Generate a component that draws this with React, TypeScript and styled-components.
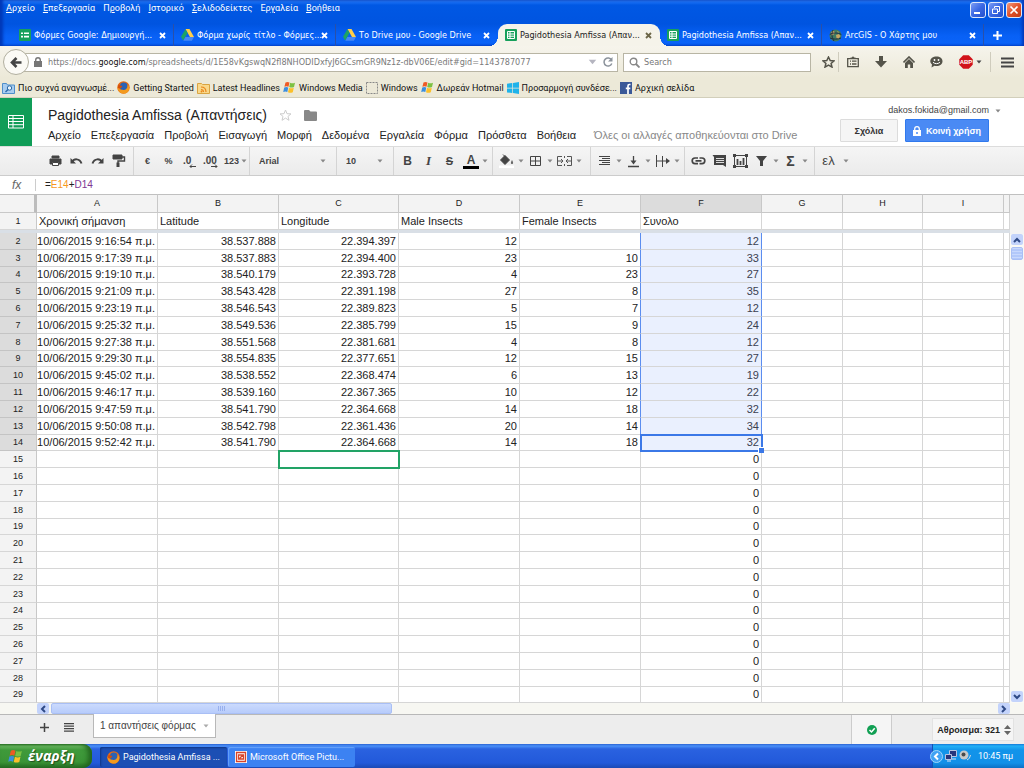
import React from 'react';
import styled, { createGlobalStyle, css } from 'styled-components';

const ui = 'Roboto, "Noto Sans", sans-serif';
const tabFont = '"DejaVu Sans Condensed", "Noto Sans", sans-serif';
const doc = '"Liberation Sans", "Noto Sans", sans-serif';

const GlobalStyle = createGlobalStyle`
  *, *::before, *::after { box-sizing: border-box; }
  body { margin: 0; background: #fff; font-family: ${doc}; color: #222; }
  button, input, select { font: inherit; color: inherit; margin: 0; padding: 0; border: 0; background: none; }
  button { cursor: pointer; white-space: nowrap; }
  svg { display: block; flex: none; }
`;

const Page = styled.div`
  display: flex;
  flex-direction: column;
  min-height: 100vh;
  overflow: hidden;
`;

/* ---------- Browser window ---------- */
const TitleArea = styled.header`
  position: relative;
  display: flex;
  flex-direction: column;
  height: 46px;
  background: linear-gradient(#4298ff 0, #1a70f4 2px, #0058e4 5px, #0054e0 24px, #0861f6 36px, #0a64f8 100%);
  box-shadow: inset 3px 0 3px #0038b8, inset -2px 0 3px #0038b8;
  font: 9px/14px ${ui};
  color: #fff;
`;
const MenuBar = styled.nav`
  display: flex;
  align-items: center;
  gap: 8px;
  height: 16px;
  padding: 0 6px;
  margin-bottom: 8px;
`;
const MenuItem = styled.button`
  color: #fff;
  u { text-underline-offset: 1px; }
`;
const WindowButtons = styled.div`
  position: absolute;
  top: 2px;
  right: 2px;
  display: flex;
  gap: 2px;
`;
const WindowButton = styled.button<{ $close?: boolean }>`
  display: grid;
  place-items: center;
  width: 16px;
  height: 16px;
  border: 1px solid #dfe8fb;
  border-radius: 3px;
  background: ${p => (p.$close ? 'linear-gradient(135deg, #f09a7c, #e2522a 50%, #c23c14)' : 'linear-gradient(135deg, #7c9cf4, #3a68e4 50%, #2450cc)')};
`;
const TabStrip = styled.div`
  display: flex;
  height: 22px;
  padding-left: 12px;
`;
const Tab = styled.div<{ $active?: boolean; $line?: boolean }>`
  position: relative;
  display: flex;
  align-items: center;
  flex: 0 1 162px;
  min-width: 0;
  gap: 3px;
  padding: 0 7px;
  border-right: 1px solid ${p => (p.$line ? '#2a50a8' : 'transparent')};
  font-family: ${tabFont};
  ${p => p.$active && css`
    background: #f5f3ea;
    color: #222;
    border-radius: 9px 9px 0 0;
    &::before, &::after {
      content: '';
      position: absolute;
      bottom: 0;
      width: 8px;
      height: 10px;
    }
    &::before { left: -8px; background: radial-gradient(ellipse 8px 10px at 0 0, transparent 97%, #f5f3ea 100%); }
    &::after { right: -9px; background: radial-gradient(ellipse 8px 10px at 100% 0, transparent 97%, #f5f3ea 100%); }
  `}
`;
const TabTitle = styled.span`
  flex: 1;
  min-width: 0;
  white-space: nowrap;
`;
const TabClose = styled.button<{ $dark?: boolean }>`
  color: ${p => (p.$dark ? '#6b6547' : '#fff')};
`;
const NewTab = styled.button`
  width: 26px;
  display: grid;
  place-items: center;
`;
const NavBar = styled.div`
  display: flex;
  align-items: center;
  height: 32px;
  padding-left: 3px;
  background: linear-gradient(#f6f4ec, #ece9d8);
  font: 9px/14px ${tabFont};
  color: #55544a;
`;
const BackButton = styled.button`
  position: relative;
  display: grid;
  place-items: center;
  width: 26px;
  height: 26px;
  border: 1px solid #b1af9f;
  border-radius: 50%;
  background: #fbfaf5;
  color: #444;
`;
const AddressBox = styled.form`
  display: flex;
  align-items: center;
  flex: 579 1 0;
  min-width: 0;
  height: 19px;
  gap: 6px;
  margin-left: -5px;
  padding: 0 4px 0 9px;
  border: 1px solid #b8b5a4;
  background: #fff;
`;
const Address = styled.a`
  flex: 1;
  overflow: hidden;
  white-space: nowrap;
  color: #7a7a7a;
  text-decoration: none;
  b { color: #111; font-weight: 400; }
`;
const SearchBox = styled.form`
  display: flex;
  align-items: center;
  flex: 176 1 0;
  min-width: 0;
  height: 19px;
  gap: 4px;
  margin-left: 5px;
  padding: 0 5px;
  border: 1px solid #b8b5a4;
  background: #fff;
`;
const SearchInput = styled.input`
  flex: 1;
  min-width: 0;
  outline: 0;
  &::placeholder { color: #777; opacity: 1; }
`;
const NavIcons = styled.div`
  display: flex;
  align-items: center;
  padding-left: 7px;
`;
const NavIcon = styled.button<{ $w?: number; $line?: boolean }>`
  display: flex;
  justify-content: center;
  align-items: center;
  gap: 3px;
  width: ${p => p.$w ?? 28}px;
  height: 20px;
  border-left: 1px solid ${p => (p.$line ? '#cfccbd' : 'transparent')};
`;
const Bookmarks = styled.nav`
  display: flex;
  align-items: center;
  gap: 3px;
  height: 20px;
  padding: 0 2px;
  background: #ece9d8;
  border-bottom: 1px solid #d2cfbb;
  font: 9px/14px ${ui};
`;
const Bookmark = styled.a`
  display: flex;
  align-items: center;
  gap: 3px;
  color: #111;
  text-decoration: none;
  white-space: nowrap;
`;

/* ---------- Document header ---------- */
const DocHeader = styled.header`
  display: flex;
  height: 48px;
`;
const AppLogo = styled.a`
  display: grid;
  place-items: center;
  width: 32px;
  background: #109d58;
`;
const DocInfo = styled.div`
  flex: 1;
  padding: 7px 0 0 16px;
`;
const TitleRow = styled.div`
  display: flex;
  align-items: center;
  gap: 12px;
  height: 20px;
`;
const DocTitle = styled.h1`
  margin: 0;
  font: 400 14px/20px ${doc};
  white-space: nowrap;
`;
const DocMenu = styled.nav`
  display: flex;
  align-items: center;
  gap: 10px;
  height: 19px;
  font-size: 11px;
  line-height: 14px;
`;
const SaveNote = styled.span`
  margin-left: 8px;
  color: #888;
  white-space: nowrap;
`;
const DocActions = styled.div`
  display: flex;
  flex-direction: column;
  align-items: flex-end;
  gap: 2px;
  padding: 6px 35px 0 0;
`;
const Account = styled.button`
  display: flex;
  align-items: center;
  gap: 6px;
  height: 13px;
  margin-right: -12px;
  font-size: 9px;
  line-height: 13px;
  color: #444;
`;
const ActionRow = styled.div`
  display: flex;
  gap: 7px;
`;
const ActionButton = styled.button<{ $primary?: boolean }>`
  display: flex;
  align-items: center;
  justify-content: center;
  gap: 5px;
  width: ${p => (p.$primary ? 84 : 58)}px;
  height: 23px;
  border: 1px solid ${p => (p.$primary ? '#3079ed' : '#dcdcdc')};
  border-radius: 1px;
  background: ${p => (p.$primary ? '#4a8af4' : '#f5f5f5')};
  color: ${p => (p.$primary ? '#fff' : '#333')};
  font-size: 9px;
  font-weight: 700;
`;

/* ---------- Toolbar ---------- */
const Toolbar = styled.div`
  display: flex;
  height: 30px;
  padding-left: 42px;
  border-top: 1px solid #dcdcdc;
  border-bottom: 1px solid #ccc;
  background: linear-gradient(#f5f5f5, #ebebeb);
  color: #444;
  font-size: 9px;
  font-weight: 700;
`;
const ToolGroup = styled.div<{ $w: number }>`
  display: flex;
  align-items: center;
  width: ${p => p.$w}px;
  padding-left: 3px;
  border-right: 1px solid #d4d4d4;
  &:last-child { border-right: 0; }
`;
const Tool = styled.button<{ $w?: number; $arrow?: boolean }>`
  display: flex;
  align-items: center;
  justify-content: ${p => (p.$arrow ? 'space-between' : 'center')};
  width: ${p => p.$w ?? (p.$arrow ? 29 : 21)}px;
  height: 24px;
  padding-left: ${p => (p.$arrow ? 3 : 0)}px;
  padding-right: ${p => (p.$arrow ? 1 : 0)}px;
`;
const Letter = styled.span<{ $italic?: boolean; $size?: number; $light?: boolean }>`
  width: 15px;
  text-align: center;
  font: ${p => (p.$italic ? 'italic' : 'normal')} ${p => (p.$light ? 400 : 700)} ${p => p.$size ?? 12}px/16px ${p => (p.$italic ? '"Liberation Serif", serif' : doc)};
`;
const PickLabel = styled.label`
  display: flex;
  align-items: center;
  flex: 1;
  padding: 0 10px 0 6px;
  height: 24px;
`;
const Pick = styled.select`
  flex: 1;
  min-width: 0;
  appearance: none;
  outline: 0;
`;

/* ---------- Formula row and grid ---------- */
const FormulaBar = styled.label`
  display: flex;
  align-items: center;
  height: 18px;
  font: 10px/16px ${doc};
`;
const Fx = styled.span`
  width: 36px;
  padding-left: 12px;
  border-right: 1px solid #ccc;
  font: italic 12px/12px "Liberation Sans", sans-serif;
  color: #666;
`;
const Formula = styled.output`
  padding-left: 9px;
`;
const Ref = styled.span<{ $c: string }>`
  color: ${p => p.$c};
`;
const GridArea = styled.main`
  display: flex;
  flex: 1;
  align-items: stretch;
`;
const Sheet = styled.table`
  flex: 1;
  width: 100%;
  table-layout: fixed;
  border-collapse: separate;
  border-spacing: 0;
  font-size: 11px;
  line-height: 13px;
`;
const ColHead = styled.th<{ $on?: boolean; $corner?: boolean }>`
  height: 19px;
  padding: 0;
  border-top: 1px solid #c0c0c0;
  border-right: ${p => (p.$corner ? '3px solid #bcbcbc' : '1px solid #c8c8c8')};
  border-bottom: 1px solid #c8c8c8;
  background: ${p => (p.$on ? '#dcdcdc' : '#f3f3f3')};
  font-size: 9px;
  font-weight: 400;
`;
const RowHead = styled.th<{ $on?: boolean }>`
  padding: 0;
  border-right: 1px solid #c8c8c8;
  border-bottom: 1px solid ${p => (p.$on ? '#c4c4c4' : '#d6d6d6')};
  background: ${p => (p.$on ? '#dcdcdc' : '#f3f3f3')};
  font-size: 9px;
  font-weight: 400;
  line-height: 11px;
`;
const Cell = styled.td<{ $text?: boolean; $picked?: boolean; $edge?: boolean; $frame?: string }>`
  position: relative;
  padding: ${p => (p.$text ? '0 2px 0 2px' : '0 2px 0 0')};
  border-right: 1px solid ${p => (p.$picked ? '#5b8def' : p.$edge ? '#5b8def' : '#d6d6d6')};
  border-bottom: 1px solid #d6d6d6;
  background: ${p => (p.$picked ? '#eaf0fe' : 'transparent')};
  color: ${p => (p.$picked ? '#3b4150' : '#222')};
  text-align: ${p => (p.$text ? 'left' : 'right')};
  white-space: nowrap;
  ${p => p.$frame && css`outline: 2px solid ${p.$frame}; outline-offset: -1px; z-index: 1;`}
`;
const FillHandle = styled.span`
  position: absolute;
  right: -3px;
  bottom: -3px;
  width: 6px;
  height: 6px;
  background: #3b78e7;
  border: 1px solid #fff;
  border-width: 1px 0 0 1px;
`;
const Row = styled.tr<{ $h: number }>`
  height: ${p => p.$h}px;
`;
const FreezeCell = styled.td`
  height: 3px;
  padding: 0;
  background: #d9dfe6;
`;
const VScroll = styled.div`
  display: flex;
  flex-direction: column;
  align-items: center;
  width: 14px;
  background: linear-gradient(#f3f3f3 39px, #f9f9f5 39px);
  border-top: 1px solid #c0c0c0;
  padding: 39px 0 1px;
`;
const ScrollButton = styled.button`
  display: grid;
  place-items: center;
  width: 12px;
  height: 11px;
  border-radius: 2px;
  background: #c3d3fb;
  color: #2f4a86;
`;
const VThumb = styled.div`
  width: 12px;
  height: 13px;
  margin: 2px 0 auto;
  border: 1px solid #a9bff5;
  border-radius: 2px;
  background: repeating-linear-gradient(#c8d8fd 0 1px, #b2c8fa 1px 3px);
`;
const HScroll = styled.div`
  display: flex;
  align-items: center;
  height: 11px;
  padding: 0 14px 0 37px;
  background: #f7f7f2;
`;
const HThumb = styled.div`
  display: grid;
  place-items: center;
  width: 35%;
  height: 11px;
  margin: 0 auto 0 2px;
  border: 1px solid #a9bff5;
  border-radius: 2px;
  background: linear-gradient(#cbdafd, #b7ccfb);
`;

/* ---------- Sheet tabs ---------- */
const SheetBar = styled.footer`
  display: flex;
  height: 30px;
  border-top: 1px solid #b8b8b8;
  background: #ededed;
  color: #444;
`;
const SheetTools = styled.div`
  display: flex;
  align-items: center;
  gap: 15px;
  width: 93px;
  padding: 0 0 4px 40px;
`;
const SheetTab = styled.button`
  display: flex;
  align-items: center;
  justify-content: space-between;
  width: 123px;
  height: 24px;
  margin-top: -1px;
  padding: 0 6px;
  border: 1px solid #b8b8b8;
  border-top: 0;
  background: #fff;
  font-size: 10px;
`;
const SyncBox = styled.div`
  display: grid;
  place-items: center;
  width: 41px;
  margin-left: auto;
  border: 1px solid #ccc;
  border-width: 0 1px;
  background: #f5f5f5;
`;
const SumBox = styled.button`
  display: flex;
  align-items: center;
  justify-content: flex-end;
  gap: 4px;
  width: 82px;
  height: 23px;
  margin: 3px 10px 0 40px;
  padding-right: 2px;
  border: 1px solid #e2e2e2;
  background: #f5f5f5;
  color: #222;
  font-size: 9px;
  font-weight: 700;
`;

/* ---------- Taskbar ---------- */
const Taskbar = styled.footer`
  display: flex;
  height: 24px;
  background: linear-gradient(#2a62d2 0, #4a90f8 2px, #2a62e0 5px, #2259da 19px, #1b49b4 100%);
  font: 9px/14px ${ui};
  color: #fff;
`;
const StartButton = styled.button`
  display: flex;
  align-items: center;
  gap: 5px;
  width: 92px;
  padding-left: 8px;
  border-radius: 0 9px 9px 0;
  background: linear-gradient(#2f7a2c 0, #6cbb62 2px, #3f9a3b 6px, #3a9436 18px, #256f24 100%);
  box-shadow: inset -4px 0 5px #22661f;
  color: #fff;
  font: italic 700 14px/18px "Open Sans", "Noto Sans", sans-serif;
  text-shadow: 1px 1px 1px #1f4d1b;
`;
const TaskButton = styled.button<{ $on?: boolean }>`
  display: flex;
  align-items: center;
  gap: 3px;
  width: 127px;
  height: 20px;
  margin: 3px 1px 0 0;
  padding-left: 7px;
  border-radius: 2px;
  background: ${p => (p.$on ? '#1c4fb4' : '#3c82f2')};
  box-shadow: ${p => (p.$on ? 'inset 1px 1px 2px #0f3686' : 'inset 1px 1px 1px #68a2fa')};
  color: #fff;
`;
const Tasks = styled.div`
  display: flex;
  flex: 1;
  padding-left: 8px;
`;
const Tray = styled.div`
  display: flex;
  align-items: center;
  justify-content: flex-end;
  gap: 2px;
  width: 92px;
  padding-right: 11px;
  border-left: 1px solid #1451b4;
  background: linear-gradient(#1378d8 0, #22b0f6 2px, #1294ea 6px, #1290e8 19px, #0d70c4 100%);
`;
const Clock = styled.time`
  margin-left: 5px;
  white-space: nowrap;
`;

/* ---------- Drawings ---------- */
const SheetsIcon = () => (
  <svg width="12" height="12" viewBox="0 0 12 12"><rect width="12" height="12" rx="1" fill="#17a05c" /><path d="M2.5 2.5h7v7h-7zM2.5 5h7M2.5 7.2h7M5 2.5v7" fill="none" stroke="#fff" /></svg>
);
const FormsIcon = () => (
  <svg width="12" height="12" viewBox="0 0 12 12"><rect width="12" height="12" rx="1" fill="#17a05c" /><path d="M2 4.2h2M5 4.2h5M2 7.6h2M5 7.6h5" stroke="#fff" strokeWidth="1.6" /></svg>
);
const DriveIcon = () => (
  <svg width="13" height="12" viewBox="0 0 13 12"><path d="M4.5 0h4L13 8H9z" fill="#ffcf48" /><path d="M4.4.2L6.5 4 2.2 11.6 0 7.8z" fill="#1da462" /><path d="M4.4 8H13l-2.1 3.7H2.3z" fill="#4688f4" /></svg>
);
const GlobeIcon = () => (
  <svg width="13" height="13" viewBox="0 0 13 13"><circle cx="6.5" cy="6.5" r="6" fill="#3f7b62" /><path d="M2 3l3-1 1 2-2 2-2 .5zM7 6l3-1 1.500 2-2 3-2-1zM8 2l2 1-1 1z" fill="#c8a663" /><path d="M.8 5.500c3-2 8-2 11.500 0M1 9c3 1.500 8 1.500 11 0M4 1c-2 4-1 8 1 11" stroke="#202f44" fill="none" /></svg>
);
const CrossIcon = () => (
  <svg width="7" height="7" viewBox="0 0 7 7"><path d="M1 1l5 5M6 1L1 6" stroke="currentColor" strokeWidth="1.800" /></svg>
);
const Caret = ({ color = '#888', w = 6 }: { color?: string; w?: number }) => (
  <svg width={w} height={w > 6 ? 6 : 4} viewBox="0 0 6 4"><path d="M.5.5h5L3 3.500z" fill={color} /></svg>
);
const FirefoxIcon = () => (
  <svg width="13" height="13" viewBox="0 0 13 13"><circle cx="6.500" cy="6.500" r="6.200" fill="#e66a11" /><circle cx="6.800" cy="5.500" r="3.900" fill="#2b62b4" /><path d="M.5 5C1 8 3 9 5.500 8.700 8 9.500 11 8 10.500 3.500 13.500 6 12.500 11 8.500 12.400 4 13.400.3 10 .5 5z" fill="#f39a1d" /><path d="M1.500 3.500L3 4.500 5.500 5 4 7 1 7z" fill="#d14d0b" /></svg>
);
const WindowsIcon = ({ s = 13 }: { s?: number }) => (
  <svg width={s} height={s} viewBox="0 0 13 13"><path d="M2.500 1.500Q4.500.3 6.500 1.500L5.500 5.800Q3.500 4.800 1.400 5.800z" fill="#ee5a24" /><path d="M7.200 1.700Q9.500 2.800 12 1.700L11 6Q8.500 7 6.200 6z" fill="#7cc142" /><path d="M1.200 6.600Q3.300 5.600 5.300 6.600L4.300 11Q2.300 10 .2 11z" fill="#3b8ede" /><path d="M6 6.800Q8.300 7.900 10.800 6.800L9.800 11.200Q7.300 12.300 5 11.200z" fill="#fbc02a" /></svg>
);
const FolderFind = () => (
  <svg width="13" height="12" viewBox="0 0 13 12"><path d="M.5 1.500h4l1 1.500h7v8.500H.5z" fill="#a9cdf0" stroke="#4f8fca" /><circle cx="7.500" cy="6" r="2.200" fill="#e9f4fd" stroke="#2b6aa8" /><path d="M6 7.500L3.500 10" stroke="#2b6aa8" strokeWidth="1.500" /></svg>
);
const RssIcon = () => (
  <svg width="13" height="12" viewBox="0 0 13 12"><path d="M.5 1.500h4l1 1h7v9H.5z" fill="#f9d88a" stroke="#d9a441" /><path d="M4 5c3 0 5 2 5 5M4 7.500c1.500 0 2.500 1 2.500 2.500" fill="none" stroke="#e8851a" strokeWidth="1.200" /><circle cx="4.500" cy="9.500" r=".9" fill="#e8851a" /></svg>
);
const BlankIcon = () => (
  <svg width="12" height="12" viewBox="0 0 12 12"><rect x=".5" y=".5" width="11" height="11" fill="none" stroke="#888" strokeDasharray="2 1" /></svg>
);
const Win8Icon = () => (
  <svg width="12" height="12" viewBox="0 0 12 12"><path d="M0 1.700L5.300 1v4.700H0zM6 .9L12 0v5.700H6zM0 6.400h5.300v4.700L0 10.400zM6 6.400h6V12l-6-.9z" fill="#1fb3ea" /></svg>
);
const FacebookIcon = () => (
  <svg width="12" height="12" viewBox="0 0 12 12"><rect width="12" height="12" fill="#3b5998" /><path d="M10.500 2.500H9.300Q8 2.500 8 4v8M5.800 6.300h4.500" fill="none" stroke="#fff" strokeWidth="1.700" /></svg>
);

const icon = (body: React.ReactNode, w = 15, h = 14) => (
  <svg width={w} height={h} viewBox={`0 0 ${w} ${h}`} fill="none" stroke="#444" strokeWidth="1">{body}</svg>
);
const icons = {
  print: icon(<><path d="M4 2h7v2H4z" fill="#444" /><path d="M2 5h11v5h-2V8H4v2H2z" fill="#444" /><path d="M4.500 8.500h6v3h-6z" fill="#fff" /></>),
  undo: icon(<><path d="M3 8C5 4.500 10.500 4 12.500 9.500" strokeWidth="2" /><path d="M1.500 4v5.500H7z" fill="#444" stroke="none" /></>),
  redo: icon(<><path d="M12 8C10 4.500 4.500 4 2.500 9.500" strokeWidth="2" /><path d="M13.500 4v5.500H8z" fill="#444" stroke="none" /></>),
  paint: icon(<><path d="M2 1h9v4H2z" fill="#444" /><path d="M11 3h2.500v4H7v2" strokeWidth="1.400" /><path d="M5.500 8.500h3V13h-3z" fill="#444" stroke="none" /></>),
  fill: icon(<><path d="M0 11.500h15V14H0z" fill="#fff" stroke="none" /><path d="M1.500 6L6 1.500 10.500 6 6 10.500z" fill="#444" /><path d="M4 .5l3 3" /><path d="M13 6c1.700 3 1.200 4 0 4s-1.700-1 0-4z" fill="#666" stroke="none" /></>),
  borders: icon(<path d="M2.500 2.500h10v9h-10zM7.500 2.500v9M2.500 7h10" />),
  merge: icon(<path d="M5 2.500H.5v9H5M10 2.500h4.500v9H10M0 7h5M15 7h-5M4 5l2 2-2 2M11 5L9 7l2 2M7.500 2v2M7.500 10v2" stroke="#555" />),
  align: icon(<path d="M2 2.500h11M5 4.500h8M2 6.500h11M5 8.500h8M2 10.500h11" />),
  valign: icon(<><path d="M7.500 2v6M2 12.500h11" strokeWidth="1.300" /><path d="M4.500 6.500h6l-3 4z" fill="#444" stroke="none" /></>),
  wrap: icon(<><path d="M1.500 1v12M7.500 2v11M2 7h10" /><path d="M11 4l4 3-4 3z" fill="#444" stroke="none" /></>),
  link: icon(<path d="M7 4H4a2.800 2.800 0 000 5.600h3M8.500 4h2.500a2.800 2.800 0 010 5.600H8.500M4.500 6.800h6" strokeWidth="1.700" />),
  comment: icon(<><path d="M.5 1h13.500v12l-3-2H2V3z" fill="#444" stroke="none" /><path d="M4 4.500h8M4 6.500h8M4 8.500h8" stroke="#ddd" /></>),
  chart: icon(<><path d="M1.500 1.500h12v11h-12z" /><path d="M4.500 11V5M7.500 11V7M10.500 11V4" strokeWidth="1.800" /><path d="M0 0h3v3H0zM12 0h3v3h-3zM0 11h3v3H0zM12 11h3v3h-3z" fill="#444" stroke="none" /></>),
  filter: icon(<path d="M2 2h11L9 7v5H6V7z" fill="#444" stroke="none" />),
};

const Underlined = ({ text, at = 0 }: { text: string; at?: number }) => (
  <MenuItem type="button">{text.slice(0, at)}<u>{text[at]}</u>{text.slice(at + 1)}</MenuItem>
);

const browserMenu: [string, number][] = [['Αρχείο', 0], ['Επεξεργασία', 0], ['Προβολή', 1], ['Ιστορικό', 0], ['Σελιδοδείκτες', 0], ['Εργαλεία', 2], ['Βοήθεια', 0]];
const docMenu = ['Αρχείο', 'Επεξεργασία', 'Προβολή', 'Εισαγωγή', 'Μορφή', 'Δεδομένα', 'Εργαλεία', 'Φόρμα', 'Πρόσθετα', 'Βοήθεια'];
const tabs = [
  { icon: <FormsIcon />, title: 'Φόρμες Google: Δημιουργή...', line: true },
  { icon: <DriveIcon />, title: 'Φόρμα χωρίς τίτλο - Φόρμες...', line: true },
  { icon: <DriveIcon />, title: 'Το Drive μου - Google Drive' },
  { icon: <SheetsIcon />, title: 'Pagidothesia Amfissa (Απαν...', active: true },
  { icon: <SheetsIcon />, title: 'Pagidothesia Amfissa (Απαν...', line: true },
  { icon: <GlobeIcon />, title: 'ArcGIS - Ο Χάρτης μου', line: true },
];
const bookmarks: [React.ReactNode, string][] = [
  [<FolderFind />, 'Πιο συχνά αναγνωσμέ...'],
  [<FirefoxIcon />, 'Getting Started'],
  [<RssIcon />, 'Latest Headlines'],
  [<WindowsIcon />, 'Windows Media'],
  [<BlankIcon />, 'Windows'],
  [<WindowsIcon />, 'Δωρεάν Hotmail'],
  [<Win8Icon />, 'Προσαρμογή συνδέσε...'],
  [<FacebookIcon />, 'Αρχική σελίδα'],
];

const columns = [
  { name: 'A', w: 121, head: 'Χρονική σήμανση' },
  { name: 'B', w: 121, head: 'Latitude' },
  { name: 'C', w: 120, head: 'Longitude' },
  { name: 'D', w: 121, head: 'Male Insects' },
  { name: 'E', w: 121, head: 'Female Insects' },
  { name: 'F', w: 121, head: 'Συνολο' },
  { name: 'G', w: 81, head: '' },
  { name: 'H', w: 80, head: '' },
  { name: 'I', w: 81, head: '' },
];
const data = [
  ['9:16:54', '38.537.888', '22.394.397', '12', '', '12'],
  ['9:17:39', '38.537.883', '22.394.400', '23', '10', '33'],
  ['9:19:10', '38.540.179', '22.393.728', '4', '23', '27'],
  ['9:21:09', '38.543.428', '22.391.198', '27', '8', '35'],
  ['9:23:19', '38.546.543', '22.389.823', '5', '7', '12'],
  ['9:25:32', '38.549.536', '22.385.799', '15', '9', '24'],
  ['9:27:38', '38.551.568', '22.381.681', '4', '8', '12'],
  ['9:29:30', '38.554.835', '22.377.651', '12', '15', '27'],
  ['9:45:02', '38.538.552', '22.368.474', '6', '13', '19'],
  ['9:46:17', '38.539.160', '22.367.365', '10', '12', '22'],
  ['9:47:59', '38.541.790', '22.364.668', '14', '18', '32'],
  ['9:50:08', '38.542.798', '22.361.436', '20', '14', '34'],
  ['9:52:42', '38.541.790', '22.364.668', '14', '18', '32'],
];
const LAST_ROW = 29;
const bodyRows = Array.from({ length: LAST_ROW - 1 }, (_, i) => {
  const d = data[i];
  const values = d ? [`10/06/2015 ${d[0]} π.μ.`, ...d.slice(1)] : ['', '', '', '', '', '0'];
  return { n: i + 2, filled: Boolean(d), values: [...values, '', '', '', ''] };
});

export default function App() {
  return (
    <Page>
      <GlobalStyle />
      <TitleArea>
        <MenuBar>{browserMenu.map(([t, i]) => <Underlined key={t} text={t} at={i} />)}</MenuBar>
        <WindowButtons>
          <WindowButton type="button" aria-label="Minimize"><svg width="10" height="10"><path d="M1 8h6" stroke="#fff" strokeWidth="2" /></svg></WindowButton>
          <WindowButton type="button" aria-label="Restore"><svg width="10" height="10"><path d="M3.500 3V1.500h5v5H7M1.500 4h5v4.500h-5z" stroke="#fff" fill="none" /></svg></WindowButton>
          <WindowButton type="button" aria-label="Close" $close><svg width="10" height="10"><path d="M1.500 1.500l7 7M8.500 1.500l-7 7" stroke="#fff" strokeWidth="1.700" /></svg></WindowButton>
        </WindowButtons>
        <TabStrip>
          {tabs.map((t, i) => (
            <Tab key={i} $active={t.active} $line={t.line}>
              {t.icon}
              <TabTitle>{t.title}</TabTitle>
              <TabClose type="button" aria-label="Close tab" $dark={t.active}><CrossIcon /></TabClose>
            </Tab>
          ))}
          <NewTab type="button" aria-label="New tab"><svg width="9" height="9"><path d="M4.500 0v9M0 4.500h9" stroke="#fff" strokeWidth="2" /></svg></NewTab>
        </TabStrip>
      </TitleArea>

      <NavBar>
        <BackButton type="button" aria-label="Back"><svg width="12" height="11" viewBox="0 0 12 11"><path d="M6.500 1L2 5.500 6.500 10M2 5.500h9.500" stroke="currentColor" strokeWidth="2.600" fill="none" /></svg></BackButton>
        <AddressBox>
          <svg width="8" height="10"><path d="M0 4h8v6H0z" fill="#777" /><path d="M1.700 4.500V3a2.300 2.300 0 014.600 0v1.500" stroke="#777" strokeWidth="1.400" fill="none" /></svg>
          <Address href="#sheet">https://docs.<b>google.com</b>/spreadsheets/d/1E58vKgswqN2fl8NHODIDxfyJ6GCsmGR9Nz1z-dbV06E/edit#gid=1143787077</Address>
          <Caret color="#b5b5c0" w={9} />
          <svg width="10" height="10"><path d="M8.500 3A4 4 0 108.800 6.500" stroke="#8c939c" strokeWidth="1.500" fill="none" /><path d="M9.500 0v4.500H5z" fill="#8c939c" /></svg>
        </AddressBox>
        <SearchBox role="search">
          <svg width="11" height="11"><circle cx="4.500" cy="4.500" r="3.300" stroke="#888" strokeWidth="1.400" fill="none" /><path d="M7 7l3.500 3.500" stroke="#888" strokeWidth="1.800" /></svg>
          <SearchInput placeholder="Search" aria-label="Search" />
        </SearchBox>
        <NavIcons>
          <NavIcon type="button" aria-label="Bookmark" $w={20}><svg width="13" height="12" viewBox="0 0 13 12"><path d="M6.500 1l1.700 3.500 3.800.4-2.900 2.500.9 3.700-3.500-2-3.500 2 .9-3.700L1 4.900l3.800-.4z" stroke="#55544a" strokeWidth="1.500" fill="none" /></svg></NavIcon>
          <NavIcon type="button" aria-label="Reading list" $line><svg width="12" height="12"><path d="M.7 2.700h10.600v8H.7zM3 5.200h1M5 5.200h4.500M3 8h1M5 8h4.500" stroke="#55544a" strokeWidth="1.300" fill="none" /><path d="M3.500 3V1.500h1.500a1 1 0 012 0h1.500V3z" fill="#55544a" /></svg></NavIcon>
          <NavIcon type="button" aria-label="Downloads"><svg width="12" height="12"><path d="M4 0h4v5h4l-6 6.500L0 5h4z" fill="#55544a" /></svg></NavIcon>
          <NavIcon type="button" aria-label="Home"><svg width="12" height="12"><path d="M.5 6.500L6 1l5.500 5.500" stroke="#55544a" strokeWidth="1.600" fill="none" /><path d="M2 7l4-4 4 4v5H7.200V8.500H4.800V12H2z" fill="#55544a" /></svg></NavIcon>
          <NavIcon type="button" aria-label="Chat"><svg width="13" height="12"><path d="M6.500.5c3.500 0 6 2 6 4.700S10 10 6.500 10c-.8 0-1.300 0-2-.3L1.500 11.500 2 8.500C1 7.500.3 6.500.3 5.200.3 2.500 3 .5 6.500.5z" fill="#55544a" /><circle cx="4.500" cy="4" r=".9" fill="#fff" /><circle cx="8.500" cy="4" r=".9" fill="#fff" /><path d="M3 6.300c2 1.800 5 1.800 7 0" stroke="#fff" fill="none" /></svg></NavIcon>
          <NavIcon type="button" aria-label="Adblock" $w={40}><svg width="14" height="14" viewBox="0 0 14 14"><path d="M4.200.3h5.600l3.900 3.900v5.600l-3.900 3.900H4.200L.3 9.800V4.200z" fill="#d1131a" /><text x="7" y="9.300" fontSize="6" fontWeight="700" fill="#fff" textAnchor="middle" fontFamily="Liberation Sans, sans-serif">ABP</text></svg><Caret color="#444" /></NavIcon>
          <NavIcon type="button" aria-label="Menu" $line $w={34}><svg width="13" height="11"><path d="M0 1.500h13M0 5.500h13M0 9.500h13" stroke="#444" strokeWidth="2" /></svg></NavIcon>
        </NavIcons>
      </NavBar>

      <Bookmarks>{bookmarks.map(([ic, t], i) => <Bookmark key={i} href="#bookmark">{ic}{t}</Bookmark>)}</Bookmarks>

      <DocHeader>
        <AppLogo href="#home" aria-label="Sheets home"><svg width="16" height="14"><path d="M.5.5h15v12.500H.5zM.5 3.500h15M.5 6.500h15M.5 9.700h15M5 .5v12.500" stroke="#fff" fill="none" /></svg></AppLogo>
        <DocInfo>
          <TitleRow>
            <DocTitle>Pagidothesia Amfissa (Απαντήσεις)</DocTitle>
            <svg width="13" height="12" viewBox="0 0 13 12"><path d="M6.500 1l1.500 3.700 4 .2-3 2.500 1 3.900-3.500-2.200L3 11.300l1-3.900L1 4.900l4-.2z" stroke="#ccc" fill="none" /></svg>
            <svg width="13" height="11"><path d="M0 1q0-1 1-1h4l1.500 1.500H12q1 0 1 1V10q0 1-1 1H1q-1 0-1-1z" fill="#888" /></svg>
          </TitleRow>
          <DocMenu>
            {docMenu.map(t => <button type="button" key={t}>{t}</button>)}
            <SaveNote>Όλες οι αλλαγές αποθηκεύονται στο Drive</SaveNote>
          </DocMenu>
        </DocInfo>
        <DocActions>
          <Account type="button">dakos.fokida@gmail.com<Caret /></Account>
          <ActionRow>
            <ActionButton type="button">Σχόλια</ActionButton>
            <ActionButton type="button" $primary>
              <svg width="8" height="10"><path d="M0 4h8v6H0z" fill="#fff" /><path d="M1.700 4.500V3a2.300 2.300 0 014.600 0v1.500" stroke="#fff" strokeWidth="1.300" fill="none" /><circle cx="4" cy="7" r="1" fill="#4a8af4" /></svg>
              Κοινή χρήση
            </ActionButton>
          </ActionRow>
        </DocActions>
      </DocHeader>

      <Toolbar>
        <ToolGroup $w={92}>
          <Tool type="button" aria-label="Print">{icons.print}</Tool>
          <Tool type="button" aria-label="Undo">{icons.undo}</Tool>
          <Tool type="button" aria-label="Redo">{icons.redo}</Tool>
          <Tool type="button" aria-label="Paint format">{icons.paint}</Tool>
        </ToolGroup>
        <ToolGroup $w={116}>
          <Tool type="button">€</Tool>
          <Tool type="button">%</Tool>
          <Tool type="button" aria-label="Fewer decimals"><svg width="14" height="14"><text x="0" y="10" fontSize="10" fontWeight="700" fill="#444" fontFamily="Liberation Sans, sans-serif">.0</text><path d="M7 12.500h6M9 10.500l-2 2 2 2" stroke="#444" fill="none" /></svg></Tool>
          <Tool type="button" aria-label="More decimals"><svg width="16" height="14"><text x="0" y="10" fontSize="10" fontWeight="700" fill="#444" fontFamily="Liberation Sans, sans-serif">.00</text><path d="M8 12.500h6M12 10.500l2 2-2 2" stroke="#444" fill="none" /></svg></Tool>
          <Tool type="button" $arrow $w={27}>123<Caret /></Tool>
        </ToolGroup>
        <ToolGroup $w={87}>
          <PickLabel><Pick aria-label="Font"><option>Arial</option></Pick><Caret /></PickLabel>
        </ToolGroup>
        <ToolGroup $w={57}>
          <PickLabel><Pick aria-label="Font size"><option>10</option></Pick><Caret /></PickLabel>
        </ToolGroup>
        <ToolGroup $w={99}>
          <Tool type="button"><Letter>B</Letter></Tool>
          <Tool type="button"><Letter $italic $size={13}>I</Letter></Tool>
          <Tool type="button" aria-label="Strikethrough"><Letter $size={11}><s>S</s></Letter></Tool>
          <Tool type="button" $arrow aria-label="Text color">
            <svg width="16" height="17"><text x="8" y="11" fontSize="12" fill="#444" textAnchor="middle" fontFamily="Liberation Sans, sans-serif">A</text><path d="M0 14.500h16" stroke="#000" strokeWidth="3" /></svg>
            <Caret />
          </Tool>
        </ToolGroup>
        <ToolGroup $w={98}>
          <Tool type="button" $arrow aria-label="Fill color">{icons.fill}<Caret /></Tool>
          <Tool type="button" $arrow aria-label="Borders">{icons.borders}<Caret /></Tool>
          <Tool type="button" $arrow aria-label="Merge">{icons.merge}<Caret /></Tool>
        </ToolGroup>
        <ToolGroup $w={94}>
          <Tool type="button" $arrow aria-label="Horizontal align">{icons.align}<Caret /></Tool>
          <Tool type="button" $arrow aria-label="Vertical align">{icons.valign}<Caret /></Tool>
          <Tool type="button" $arrow aria-label="Wrapping">{icons.wrap}<Caret /></Tool>
        </ToolGroup>
        <ToolGroup $w={130}>
          <Tool type="button" aria-label="Link">{icons.link}</Tool>
          <Tool type="button" aria-label="Comment">{icons.comment}</Tool>
          <Tool type="button" aria-label="Chart">{icons.chart}</Tool>
          <Tool type="button" $arrow aria-label="Filter">{icons.filter}<Caret /></Tool>
          <Tool type="button" $arrow><Letter $size={14}>Σ</Letter><Caret /></Tool>
        </ToolGroup>
        <ToolGroup $w={40}>
          <Tool type="button" $arrow $w={32}><Letter $size={13} $light>ελ</Letter><Caret /></Tool>
        </ToolGroup>
      </Toolbar>

      <FormulaBar>
        <Fx>fx</Fx>
        <Formula>=<Ref $c="#f7981d">E14</Ref>+<Ref $c="#7e3794">D14</Ref></Formula>
      </FormulaBar>

      <GridArea>
        <Sheet>
          <colgroup>
            <col width={37} />
            {columns.map(c => <col key={c.name} width={c.w} />)}
            <col />
          </colgroup>
          <thead>
            <tr>
              <ColHead $corner />
              {columns.map(c => <ColHead key={c.name} scope="col" $on={c.name === 'F'}>{c.name}</ColHead>)}
              <ColHead />
            </tr>
          </thead>
          <tbody>
            <Row $h={17}>
              <RowHead scope="row">1</RowHead>
              {columns.map(c => <Cell key={c.name} $text>{c.head}</Cell>)}
              <Cell />
            </Row>
            <tr><FreezeCell colSpan={11} /></tr>
            {bodyRows.map(r => (
              <Row key={r.n} $h={r.n % 5 === 4 ? 16 : 17}>
                <RowHead scope="row" $on={r.filled}>{r.n}</RowHead>
                {r.values.map((v, c) => (
                  <Cell
                    key={c}
                    $picked={r.filled && c === 5}
                    $edge={r.filled && c === 4}
                    $frame={r.n === 14 && c === 5 ? '#3b78e7' : r.n === 15 && c === 2 ? '#22a366' : undefined}
                  >
                    {v}
                    {r.n === 14 && c === 5 && <FillHandle />}
                  </Cell>
                ))}
              </Row>
            ))}
          </tbody>
        </Sheet>
        <VScroll>
          <ScrollButton type="button" aria-label="Scroll up"><svg width="8" height="6"><path d="M1 5l3-3 3 3" stroke="currentColor" strokeWidth="2" fill="none" /></svg></ScrollButton>
          <VThumb />
          <ScrollButton type="button" aria-label="Scroll down"><svg width="8" height="6"><path d="M1 1l3 3 3-3" stroke="currentColor" strokeWidth="2" fill="none" /></svg></ScrollButton>
        </VScroll>
      </GridArea>
      <HScroll>
        <ScrollButton type="button" aria-label="Scroll left"><svg width="6" height="8"><path d="M5 1L2 4l3 3" stroke="currentColor" strokeWidth="2" fill="none" /></svg></ScrollButton>
        <HThumb><svg width="7" height="5"><path d="M.5 0v5M2.500 0v5M4.500 0v5M6.500 0v5" stroke="#98b0ee" /></svg></HThumb>
        <ScrollButton type="button" aria-label="Scroll right"><svg width="6" height="8"><path d="M1 1l3 3-3 3" stroke="currentColor" strokeWidth="2" fill="none" /></svg></ScrollButton>
      </HScroll>

      <SheetBar>
        <SheetTools>
          <button type="button" aria-label="Add sheet"><svg width="9" height="9"><path d="M4.500 0v9M0 4.500h9" stroke="#444" strokeWidth="1.500" /></svg></button>
          <button type="button" aria-label="All sheets"><svg width="10" height="9"><path d="M0 .7h10M0 3.200h10M0 5.700h10M0 8.200h10" stroke="#444" strokeWidth="1.300" /></svg></button>
        </SheetTools>
        <SheetTab type="button">1 απαντήσεις φόρμας<Caret color="#aaa" /></SheetTab>
        <SyncBox><svg width="10" height="10"><circle cx="5" cy="5" r="5" fill="#12a054" /><path d="M2.500 5l2 2 3.200-3.800" stroke="#fff" strokeWidth="1.500" fill="none" /></svg></SyncBox>
        <SumBox type="button">Αθροισμα: 321<svg width="7" height="10"><path d="M3.500 0L7 4H0zM0 6h7l-3.500 4z" fill="#666" /></svg></SumBox>
      </SheetBar>

      <Taskbar>
        <StartButton type="button"><WindowsIcon s={15} />έναρξη</StartButton>
        <Tasks>
          <TaskButton type="button" $on><FirefoxIcon />Pagidothesia Amfissa ...</TaskButton>
          <TaskButton type="button"><svg width="12" height="12"><rect width="12" height="12" fill="#fff" /><path d="M1.500 1.500h9v9h-9zM3.500 4h5v4h-5zM4 8l4-4" stroke="#d8432a" strokeWidth="1.300" fill="none" /></svg>Microsoft Office Pictu...</TaskButton>
        </Tasks>
        <Tray>
          <svg width="13" height="13"><circle cx="6.500" cy="6.500" r="6" fill="#3fa2f4" stroke="#9fd6fb" /><path d="M8 3.500l-3 3 3 3" stroke="#fff" strokeWidth="2" fill="none" /></svg>
          <svg width="12" height="12"><path d="M4.500.5h7v6h-7z" fill="#27357c" stroke="#b8c4e2" /><path d="M.5 4.500h6v5h-6z" fill="#27357c" stroke="#b8c4e2" /><path d="M2 11h4M7 9h4" stroke="#dde4f4" /></svg>
          <svg width="12" height="12"><circle cx="5" cy="5" r="4.500" fill="#c9c9c9" /><circle cx="4.500" cy="4.500" r="2" fill="#4a4a4a" /><path d="M8 10q3-1 3.500-5" stroke="#dcdcdc" fill="none" /></svg>
          <Clock>10:45 πμ</Clock>
        </Tray>
      </Taskbar>
    </Page>
  );
}
